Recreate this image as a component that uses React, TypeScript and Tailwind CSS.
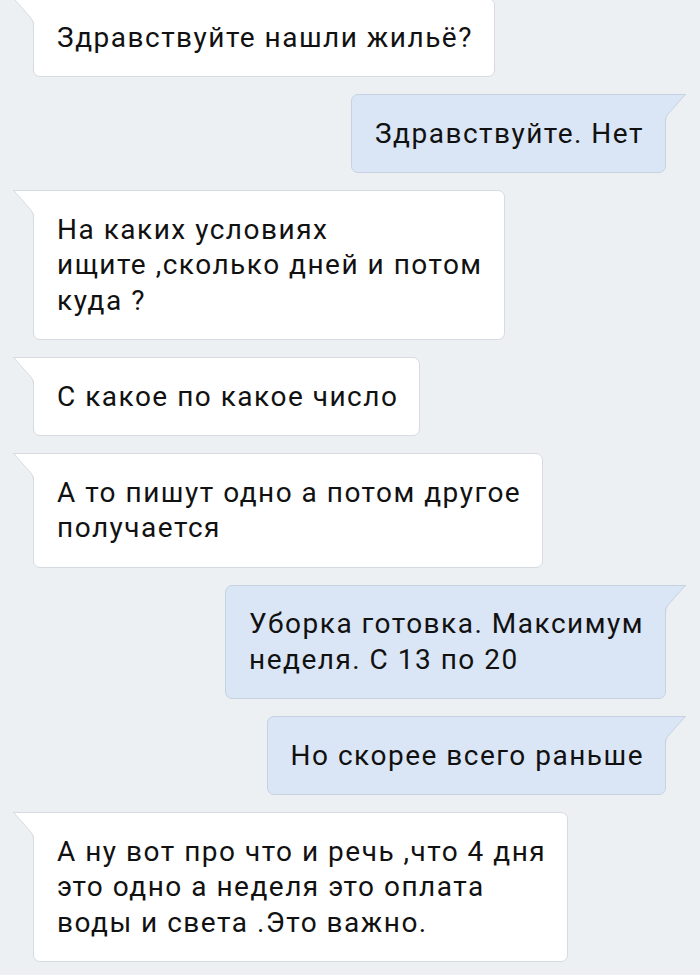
import React from "react";

type Msg = { out: boolean; lines: string[] };

const msgs: Msg[] = [
  { out: false, lines: ["Здравствуйте нашли жильё?"] },
  { out: true, lines: ["Здравствуйте. Нет"] },
  { out: false, lines: ["На каких условиях", "ищите ,сколько дней и потом", "куда ?"] },
  { out: false, lines: ["С какое по какое число"] },
  { out: false, lines: ["А то пишут одно а потом другое", "получается"] },
  { out: true, lines: ["Уборка готовка. Максимум", "неделя. С 13 по 20"] },
  { out: true, lines: ["Но скорее всего раньше"] },
  { out: false, lines: ["А ну вот про что и речь ,что 4 дня", "это одно а неделя это оплата", "воды и света .Это важно."] },
];

function Tail({ fill, stroke, out }: { fill: string; stroke: string; out: boolean }) {
  return (
    <svg
      width="26"
      height="32"
      viewBox="0 0 26 32"
      className={out ? "absolute -right-[21px] -top-px -scale-x-100" : "absolute -left-[21px] -top-px"}
    >
      <path d="M0.5,0.5 H26 V32 H21 V27 Q21,23.5 18.3,20.5 Z" fill={fill} />
      <path d="M0,0.5 H26" stroke={stroke} strokeWidth="1" fill="none" />
      <path d="M0.8,0.6 L18.2,20.3 Q20.5,23 20.5,27.5 V32" stroke={stroke} strokeWidth="1" fill="none" />
    </svg>
  );
}

export default function App() {
  return (
    <div
      className="w-[700px] h-[975px] overflow-hidden bg-[#edf0f3] pl-[33px] pr-[34px]"
      style={{ fontFamily: "Roboto, 'Noto Sans', sans-serif" }}
    >
      <div className="-mt-[2px] flex flex-col gap-[17px]">
        {msgs.map((m, i) => (
          <div key={i} className={m.out ? "flex justify-end" : "flex justify-start"}>
            <div
              className={
                m.out
                  ? "relative rounded-[7px] rounded-tr-none border border-[#c6d2df] bg-[#dae6f5] pl-[23px] pr-[21px] py-[20.75px] text-[28px] leading-[35.5px] tracking-[1.5px] text-[#111] whitespace-nowrap"
                  : "relative rounded-[7px] rounded-tl-none border border-[#d6dbe1] bg-white pl-[23px] pr-[21px] py-[20.75px] text-[28px] leading-[35.5px] tracking-[1.5px] text-[#111] whitespace-nowrap"
              }
            >
              <Tail
                out={m.out}
                fill={m.out ? "#dae6f5" : "#ffffff"}
                stroke={m.out ? "#c6d2df" : "#d6dbe1"}
              />
              {m.lines.map((l, j) => (
                <div key={j}>{l}</div>
              ))}
            </div>
          </div>
        ))}
      </div>
    </div>
  );
}
